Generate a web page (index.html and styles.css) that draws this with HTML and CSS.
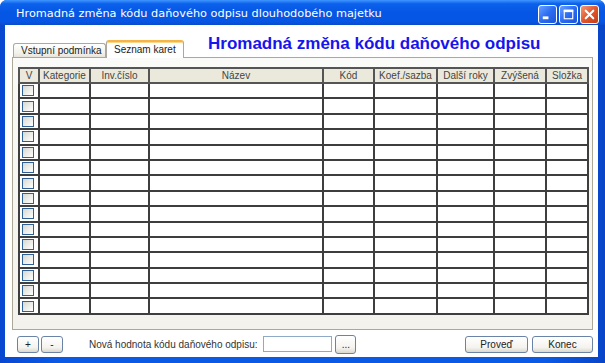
FILE: index.html
```html
<!DOCTYPE html>
<html lang="cs">
<head>
    <meta charset="UTF-8">
    <title>Hromadná změna kódu daňového odpisu</title>
    <link rel="stylesheet" href="styles.css">
</head>
<body>
    <div class="window">
        <!-- titulek okna -->
        <div class="titlebar">
            <span class="title-text">Hromadná změna kódu daňového odpisu dlouhodobého majetku</span>
            <span class="ctl">
                <svg width="18" height="18" viewBox="0 0 18 18"><rect x="4" y="11" width="6" height="3" fill="#fff"/></svg>
            </span>
            <span class="ctl">
                <svg width="18" height="18" viewBox="0 0 18 18"><rect x="4.5" y="4.5" width="9" height="9" fill="none" stroke="#fff" stroke-width="1.2"/><rect x="4" y="4" width="10" height="2.5" fill="#fff"/></svg>
            </span>
            <span class="ctl close">
                <svg width="18" height="18" viewBox="0 0 18 18"><path d="M5 5 L13 13 M13 5 L5 13" stroke="#fff" stroke-width="2.2" stroke-linecap="round"/></svg>
            </span>
        </div>

        <div class="client">
            <div class="tab-row">
                <div class="tab">Vstupní podmínka</div>
                <div class="tab active">Seznam karet</div>
                <h1 class="heading">Hromadná změna kódu daňového odpisu</h1>
            </div>

            <div class="panel">
                <table class="grid">
                    <colgroup>
                        <col style="width:20px">
                        <col style="width:51px">
                        <col style="width:59px">
                        <col style="width:174px">
                        <col style="width:51px">
                        <col style="width:63px">
                        <col style="width:57px">
                        <col style="width:52px">
                        <col style="width:42px">
                    </colgroup>
                    <thead>
                        <tr>
                            <th>V</th><th>Kategorie</th><th>Inv.číslo</th><th>Název</th><th>Kód</th><th>Koef./sazba</th><th>Další roky</th><th>Zvýšená</th><th>Složka</th>
                        </tr>
                    </thead>
                    <tbody>
                        <tr><td><span class="chk"></span></td><td></td><td></td><td></td><td></td><td></td><td></td><td></td><td></td></tr>
                        <tr><td><span class="chk"></span></td><td></td><td></td><td></td><td></td><td></td><td></td><td></td><td></td></tr>
                        <tr><td><span class="chk"></span></td><td></td><td></td><td></td><td></td><td></td><td></td><td></td><td></td></tr>
                        <tr><td><span class="chk"></span></td><td></td><td></td><td></td><td></td><td></td><td></td><td></td><td></td></tr>
                        <tr><td><span class="chk"></span></td><td></td><td></td><td></td><td></td><td></td><td></td><td></td><td></td></tr>
                        <tr><td><span class="chk"></span></td><td></td><td></td><td></td><td></td><td></td><td></td><td></td><td></td></tr>
                        <tr><td><span class="chk"></span></td><td></td><td></td><td></td><td></td><td></td><td></td><td></td><td></td></tr>
                        <tr><td><span class="chk"></span></td><td></td><td></td><td></td><td></td><td></td><td></td><td></td><td></td></tr>
                        <tr><td><span class="chk"></span></td><td></td><td></td><td></td><td></td><td></td><td></td><td></td><td></td></tr>
                        <tr><td><span class="chk"></span></td><td></td><td></td><td></td><td></td><td></td><td></td><td></td><td></td></tr>
                        <tr><td><span class="chk"></span></td><td></td><td></td><td></td><td></td><td></td><td></td><td></td><td></td></tr>
                        <tr><td><span class="chk"></span></td><td></td><td></td><td></td><td></td><td></td><td></td><td></td><td></td></tr>
                        <tr><td><span class="chk"></span></td><td></td><td></td><td></td><td></td><td></td><td></td><td></td><td></td></tr>
                        <tr><td><span class="chk"></span></td><td></td><td></td><td></td><td></td><td></td><td></td><td></td><td></td></tr>
                        <tr><td><span class="chk"></span></td><td></td><td></td><td></td><td></td><td></td><td></td><td></td><td></td></tr>
                    </tbody>
                </table>
            </div>

            <!-- spodní lišta -->
            <div class="bottom-bar">
                <button class="btn small">+</button>
                <button class="btn small">-</button>
                <span class="label">Nová hodnota kódu daňového odpisu:</span>
                <input type="text" class="code-input">
                <button class="btn dots">...</button>
                <span class="spacer"></span>
                <button class="btn wide">Proveď</button>
                <button class="btn wide konec">Konec</button>
            </div>
        </div>
    </div>
</body>
</html>
```

FILE: styles.css
```css
body {
    margin: 0;
    font-family: "Liberation Sans", Arial, sans-serif;
    font-size: 10px;
    color: #222;
    background: #fff;
}

.window {
    width: 605px;
    height: 363px;
    display: flex;
    flex-direction: column;
    background: linear-gradient(90deg, #0848d0, #0a5ae6 10%, #0a5ae6 90%, #0845c8);
    border-radius: 7px 7px 0 0;
    overflow: hidden;
}

.titlebar {
    height: 25px;
    flex: none;
    display: flex;
    align-items: center;
    padding: 0 6px 0 16px;
    background: linear-gradient(#3f96ff 0%, #0c61ec 15%, #0556e4 50%, #0656e6 85%, #0a4cc8 100%);
    color: #fff;
    font-family: "DejaVu Sans", Verdana, sans-serif;
    font-size: 11.3px;
}

.title-text {
    flex: 1;
    padding-top: 1px;
}

.ctl {
    width: 17px;
    height: 17px;
    margin-left: 2px;
    border: 1px solid #fff;
    border-radius: 3px;
    background: linear-gradient(135deg, #6aa0ff, #2a6cf2 50%, #1d55d8);
    display: flex;
    align-items: center;
    justify-content: center;
    margin-top: 3px;
}

.ctl svg {
    width: 17px;
    height: 17px;
}

.ctl.close {
    background: linear-gradient(135deg, #f29a78, #e0572c 50%, #c43e16);
}

.client {
    flex: 1;
    margin: 0 7px 6px 5px;
    background: #fff;
    display: flex;
    flex-direction: column;
    padding: 15px 5px 0 7px;
}

.tab-row {
    display: flex;
    align-items: flex-end;
    height: 17px;
    padding-left: 1px;
    position: relative;
    z-index: 1;
}

.tab {
    height: 13px;
    line-height: 13px;
    padding: 0 0 0 7px;
    width: 84px;
    border: 1px solid #a9a99f;
    border-bottom: none;
    border-radius: 3px 3px 0 0;
    background: linear-gradient(#fff, #f2f1ea 70%, #e7e5da);
    font-size: 10px;
    color: #222;
}

.tab.active {
    line-height: 16px;
    width: 69px;
    padding-left: 7px;
    border-top: 2px solid #f5b448;
    background: #fff;
    margin-bottom: -1px;
    height: 16px;
    box-shadow: inset 0 1px 0 #fcd78a;
}

.heading {
    margin: 0 0 3px 24px;
    font-size: 17px;
    font-weight: bold;
    color: #1616ec;
    line-height: 20px;
    white-space: nowrap;
}

.panel {
    height: 262px;
    border: 1px solid #aba898;
    background: linear-gradient(#fafaf8, #f3f2ec);
    padding: 9px 5px 0 5px;
}

.grid {
    border-collapse: collapse;
    table-layout: fixed;
    width: 570px;
    background: #fff;
}

.grid th,
.grid td {
    border: 2px solid #3e3e3e;
    padding: 0;
    font-weight: normal;
}

.grid th {
    height: 13px;
    background: #ebe9dc;
    color: #444;
    font-size: 10px;
    line-height: 13px;
    text-align: center;
    border-color: #555;
}

.grid td {
    height: 13.4px;
}

.grid td:first-child {
    padding-left: 2px;
}

.chk {
    display: block;
    width: 10px;
    height: 9px;
    border: 1px solid #2e5f96;
    background: linear-gradient(135deg, #d8d8d2, #f3f3f0 70%, #fff);
}

.bottom-bar {
    flex: 1;
    display: flex;
    align-items: center;
    padding-left: 5px;
    padding-top: 1px;
}

.btn {
    font-family: "Liberation Sans", Arial, sans-serif;
    font-size: 10px;
    color: #222;
    border: 1px solid #6b84a6;
    border-radius: 3px;
    background: linear-gradient(#ffffff, #f4f3ef 70%, #dcd8cc);
    padding: 0;
    height: 17px;
}

.btn.small {
    width: 22px;
    margin-right: 2px;
}

.label {
    margin-left: 24px;
    color: #333;
}

.code-input {
    margin-left: 6px;
    width: 69px;
    height: 16px;
    box-sizing: border-box;
    border: 1px solid #8fa9c7;
    padding: 0;
}

.btn.dots {
    margin-left: 3px;
    width: 21px;
    height: 19px;
}

.spacer {
    flex: 1;
}

.btn.wide {
    width: 63px;
}

.btn.konec {
    width: 61px;
    margin-left: 4px;
}
```
